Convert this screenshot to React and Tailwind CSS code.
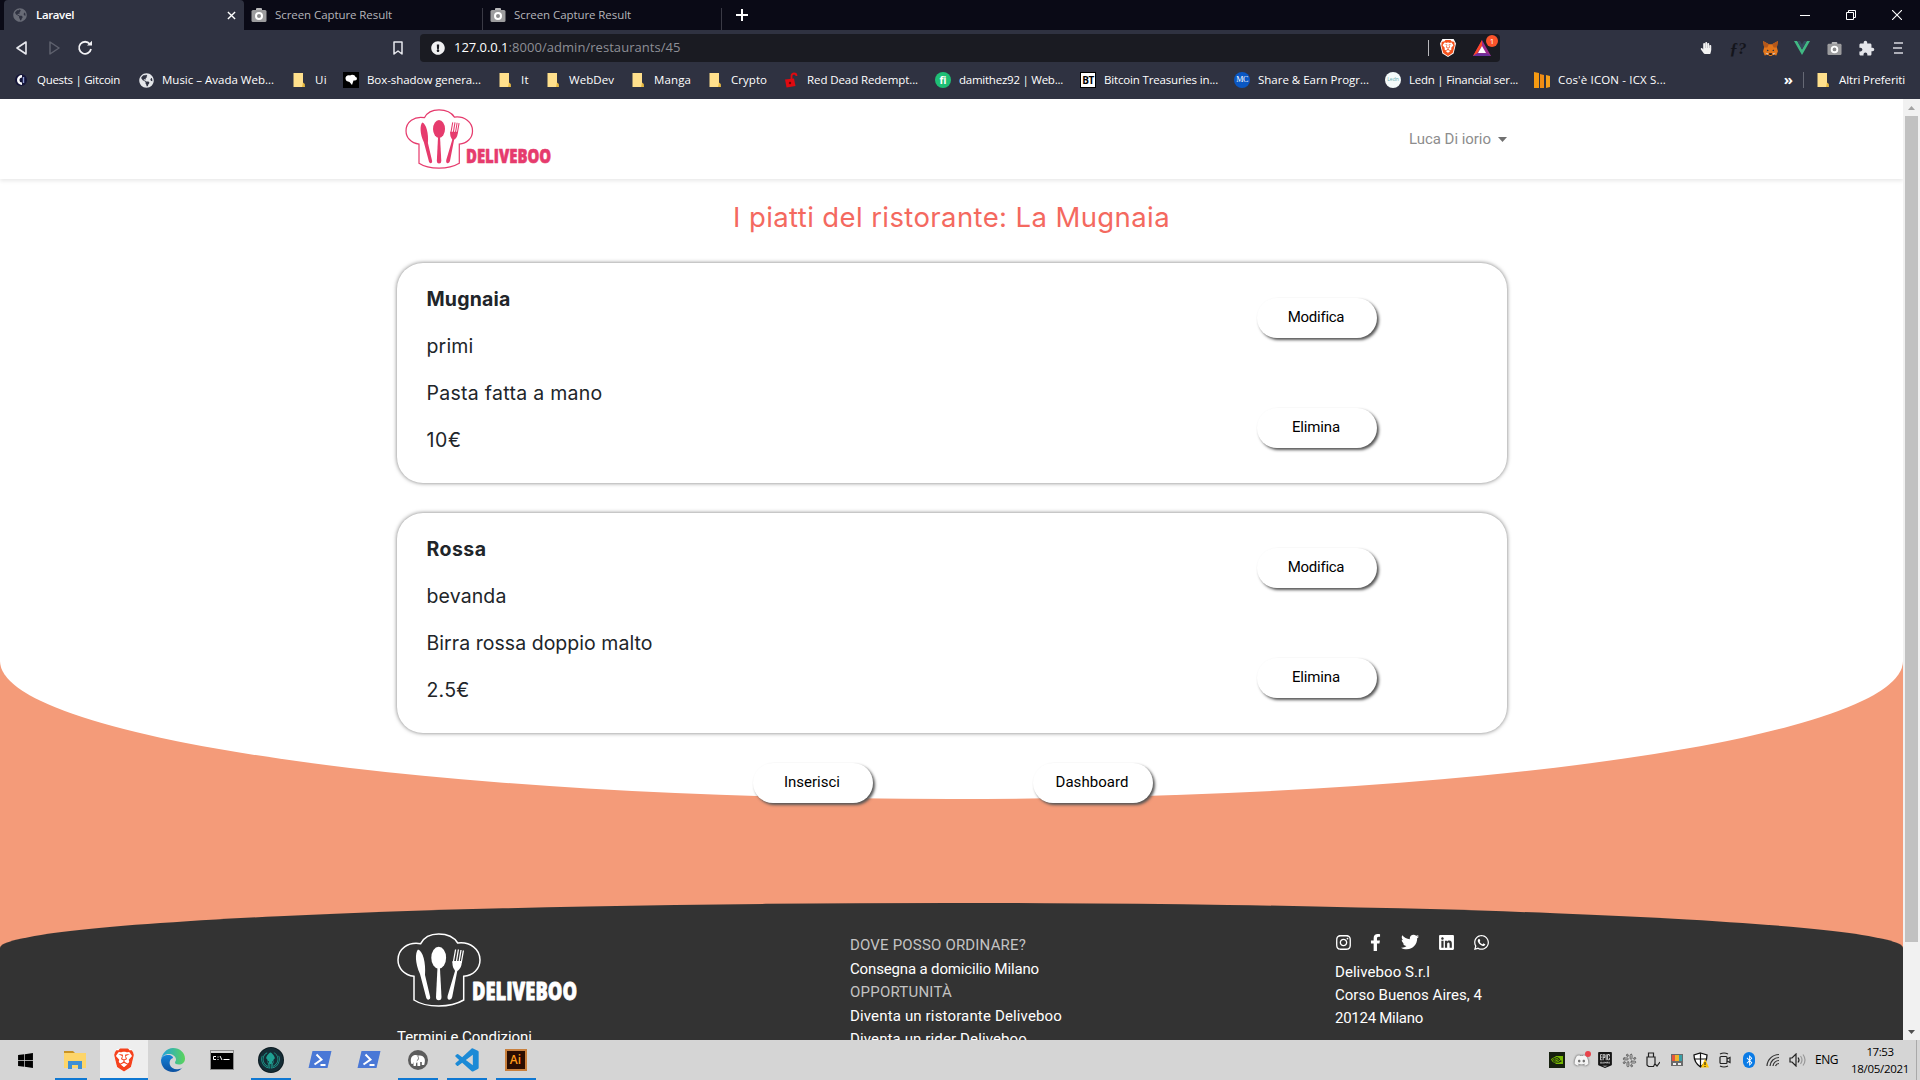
import { useLayoutEffect, useRef, useState } from "react";
import {
  FaInstagram, FaFacebookF, FaTwitter, FaLinkedin, FaWhatsapp, FaWindows, FaBluetoothB,
  FaDiscord, FaGitkraken, FaGlobeAmericas, FaHandPaper, FaExclamationCircle,
} from "react-icons/fa";
import { SiBrave, SiNvidia, SiEpicgames } from "react-icons/si";
import { BiLogoVisualStudio } from "react-icons/bi";
import { MdExtension } from "react-icons/md";
import { Slack } from "lucide-react";

/* A single line of text whose tracking is adjusted to fill the given width. */
function Label({ width, className = "", children }) {
  const ref = useRef(null);
  const [spacing, setSpacing] = useState(0);
  useLayoutEffect(() => {
    const el = ref.current;
    const natural = el.getBoundingClientRect().width - spacing * children.length;
    setSpacing((width - natural) / children.length);
  }, [width, children]);
  return (
    <span ref={ref} className={`inline-block shrink-0 whitespace-pre ${className}`} style={{ letterSpacing: `${spacing}px` }}>
      {children}
    </span>
  );
}

function Logo({ className }) {
  return (
    <svg viewBox="0 0 182 74" className={`overflow-visible ${className}`} fill="currentColor">
      <path
        d="M23.7 10.7C27 4 34 1 41.7 1S57 4 60.7 10C73 8.5 83 16 83 27C83 36 76 42.5 66.7 43.3V67C60 71 50 73 41.7 73S23 71 17 67V43.3C7 42 1 35 1 27C1 16 11 8.5 23.7 10.7Z"
        fill="none" stroke="currentColor" strokeWidth="1.5"
      />
      <path d="M21 16.5C18 20 18 30 23 41L29.3 65Q30 67 31.5 66.8Q33.7 66 33.2 64L28 42C29 30 26 18 21 16.5Z" />
      <ellipse cx="41.7" cy="24.7" rx="7.4" ry="11" />
      <path d="M40.5 34L39 64Q39 67.2 41.7 67.2Q44.5 67.2 44.5 64L42.9 34Z" />
      <path d="M58.6 16.5L56.2 30M61.4 16.5L59 31M64 17L61.7 31M66.4 17.5L64.2 30" stroke="currentColor" strokeWidth="1.3" />
      <path d="M55.5 28C55 35 57.6 36 58 38L50.6 63Q50 67 52.5 66.8Q54.7 66.4 55.2 64L60.3 38C62.5 36.5 64.8 34 64.9 28Z" />
      <text
        x="75" y="67" fontFamily="'Open Sans', sans-serif" fontWeight="800" fontSize="24.5" textLength="105" lengthAdjust="spacingAndGlyphs"
        stroke="currentColor" strokeWidth="0.8" strokeLinejoin="round"
      >
        DELIVEBOO
      </text>
    </svg>
  );
}

function CameraIcon({ className }) {
  return (
    <svg viewBox="0 0 16 16" className={className}>
      <rect x="5" y="1" width="6" height="4" rx="1" fill="#b9b9bb" />
      <rect x="0.5" y="3" width="15" height="12" rx="1.5" fill="#9c9c9e" />
      <circle cx="8" cy="9" r="3" fill="#8a8a8c" stroke="#fff" strokeWidth="2" />
    </svg>
  );
}

function Folder() {
  return (
    <svg viewBox="0 0 16 16" className="size-4">
      <path d="M2.5 1h9.5v12.5h1.5V15h-11z" fill="#ffe08c" />
      <path d="M12 10.5l1.8 1.5v3H11z" fill="#e8b93f" />
    </svg>
  );
}

function Gitcoin() {
  return (
    <svg viewBox="0 0 16 16" className="size-4">
      <circle cx="8" cy="8" r="6" fill="#15163a" />
      <path d="M9 3a5 5 0 1 0 0 10v-2.5a2.5 2.5 0 0 1 0-5z" fill="#fff" />
      <path d="M10.5 5v6" stroke="#8d9ad0" strokeWidth="1.4" />
    </svg>
  );
}

function MetaMask() {
  return (
    <svg viewBox="0 0 16 16" className="size-[17px]">
      <path d="M1 1l5.5 3h3L15 1l-1 6 1 3.5-1.5 4-3-.8L9 15H7l-1.5-1.3-3 .8L1 10.5 2 7z" fill="#e2761b" />
      <path d="M1 1l5.500 3L5 7 2 7zM15 1L9.500 4 11 7l3 0z" fill="#b4571a" />
      <path d="M5 9l1.500 1-2 .5zM11 9l-1.500 1 2 .5z" fill="#233447" />
      <path d="M6.500 12.500h3L9 14H7z" fill="#161616" />
      <path d="M3 12l3 .5-.5 1.500zM13 12l-3 .5.5 1.500z" fill="#d7c1b3" />
    </svg>
  );
}

const bookmarks = [
  { w: 125, tw: 83, label: "Quests | Gitcoin", icon: <Gitcoin /> },
  { w: 153, tw: 112, label: "Music – Avada Web...", icon: <FaGlobeAmericas className="size-[15px] text-[#e4e6ea]" /> },
  { w: 52, tw: 12, label: "Ui", icon: <Folder /> },
  {
    w: 154, tw: 114, label: "Box-shadow genera...",
    icon: (
      <svg viewBox="0 0 16 16" className="size-4">
        <path d="M0 0h16v16H0z" fill="#000" />
        <path d="M2.500 7C2 4 5 2.500 7 3.500 9 2 12 3 12.500 5c2 0 2 3.500-.5 3.500h-1.500L9 13 6.500 10 3.500 9z" fill="#fff" />
      </svg>
    ),
  },
  { w: 48, tw: 8, label: "It", icon: <Folder /> },
  { w: 85, tw: 45, label: "WebDev", icon: <Folder /> },
  { w: 77, tw: 37, label: "Manga", icon: <Folder /> },
  { w: 76, tw: 36, label: "Crypto", icon: <Folder /> },
  {
    w: 152, tw: 111, label: "Red Dead Redempt...",
    icon: (
      <svg viewBox="0 0 16 16" className="size-4">
        <path d="M2 7.500l9-1 1.500 7.500-9 1.500z" fill="#e00a10" />
        <path d="M8.500 7V4a2.500 2.500 0 0 1 5 0" fill="none" stroke="#e00a10" strokeWidth="1.800" />
        <circle cx="7" cy="11" r="1.200" fill="#6e0508" />
      </svg>
    ),
  },
  { w: 145, tw: 104, label: "damithez92 | Web...", icon: <span className="flex size-4 items-center justify-center rounded-full bg-[#1fbf75] font-['Open_Sans',sans-serif] text-[10px] font-bold">fi</span> },
  { w: 154, tw: 114, label: "Bitcoin Treasuries in...", icon: <span className="flex size-4 items-center justify-center border border-black bg-white font-['Open_Sans',sans-serif] text-[10px] font-bold tracking-tighter text-black">BT</span> },
  { w: 151, tw: 111, label: "Share & Earn Progr...", icon: <span className="flex size-4 items-center justify-center rounded-full bg-[#0a57c2] font-['Liberation_Serif',serif] text-[8px] tracking-tighter">MC</span> },
  { w: 149, tw: 109, label: "Ledn | Financial ser...", icon: <span className="flex size-4 items-center justify-center rounded-full bg-[#f4fafa] text-[5px] text-[#5fa9ad]">Ledn</span> },
  {
    w: 160, tw: 108, label: "Cos'è ICON - ICX S...",
    icon: (
      <svg viewBox="0 0 16 16" className="size-4">
        <path d="M0 0l5 1v15H0z" fill="#f59a12" /><path d="M6 2l4 1v13H6z" fill="#f08c14" /><path d="M12 3l4 1v11l-4 1z" fill="#f5a01c" />
      </svg>
    ),
  },
];

function Tab({ children, className }) {
  return <div className={`flex h-[30px] items-center ${className}`}>{children}</div>;
}

function TabStrip() {
  return (
    <div className="flex h-[30px] items-center bg-[#0a0a16] pl-1">
      <Tab className="w-[240px] rounded-t bg-[#2f3241] pl-[9px]">
        <FaGlobeAmericas className="size-[14px] text-[#686b76]" />
        <Label width={38} className="ml-[9px] text-[11.5px] font-semibold text-white">Laravel</Label>
        <svg viewBox="0 0 10 10" className="ml-auto mr-[8px] size-[9px]"><path d="M1 1l8 8M9 1l-8 8" stroke="#fff" strokeWidth="1.5" /></svg>
      </Tab>
      <Tab className="w-[239px] pl-[7px]">
        <CameraIcon className="size-4" />
        <Label width={117} className="ml-2 text-[11.5px] text-[#b5b5ba]">Screen Capture Result</Label>
        <span className="ml-auto mt-2 h-[22px] w-px bg-[#3a3a45]" />
      </Tab>
      <Tab className="w-[239px] pl-[7px]">
        <CameraIcon className="size-4" />
        <Label width={117} className="ml-2 text-[11.5px] text-[#b5b5ba]">Screen Capture Result</Label>
        <span className="ml-auto mt-2 h-[22px] w-px bg-[#3a3a45]" />
      </Tab>
      <svg viewBox="0 0 12 12" className="ml-[14px] size-3"><path d="M6 0v12M0 6h12" stroke="#fff" strokeWidth="2" /></svg>
      <div className="ml-auto mr-[18px] flex items-center gap-9 text-white">
        <svg viewBox="0 0 10 10" className="size-[10px]"><path d="M0 5.500h10" stroke="currentColor" /></svg>
        <svg viewBox="0 0 10 10" className="size-[10px]" fill="none" stroke="currentColor"><path d="M.5 2.500h7v7h-7zM2.500 2.500v-2h7v7h-2" /></svg>
        <svg viewBox="0 0 10 10" className="size-[10px]"><path d="M0 0l10 10M10 0L0 10" stroke="currentColor" strokeWidth="1.100" /></svg>
      </div>
    </div>
  );
}

function Toolbar() {
  return (
    <div className="flex h-[35px] items-center pt-px">
      <svg viewBox="0 0 14 14" className="ml-[15px] size-[14px]" fill="none"><path d="M11 1v12L2 7z" stroke="#e8e9ee" strokeWidth="1.600" strokeLinejoin="round" /></svg>
      <svg viewBox="0 0 14 14" className="ml-[18px] size-[14px]" fill="none"><path d="M3 1v12l9-6z" stroke="#5f626e" strokeWidth="1.500" strokeLinejoin="round" /></svg>
      <svg viewBox="0 0 16 16" className="ml-4 size-4" fill="none"><path d="M12.800 4A6 6 0 1 0 14 9" stroke="#f2f2f5" strokeWidth="1.800" /><path d="M10 5.500h5V.8z" fill="#f2f2f5" /></svg>
      <svg viewBox="0 0 12 14" className="ml-[299px] h-[14px] w-3" fill="none"><path d="M2 1h8v12L6 10l-4 3z" stroke="#e8e9ee" strokeWidth="1.500" strokeLinejoin="round" /></svg>
      <div className="ml-[16px] flex h-7 w-[1080px] items-center rounded bg-[#1a1b22] pl-[11px]">
        <FaExclamationCircle className="size-[14px] text-[#f0f0f2]" />
        <Label width={54.5} className="ml-[9px] text-[13px] text-white">127.0.0.1</Label>
        <Label width={172} className="text-[13px] text-[#8e8f96]">:8000/admin/restaurants/45</Label>
        <span className="ml-auto h-4 w-px bg-[#b8b8bc]" />
        <span className="ml-[11px] flex h-[18px] w-4 items-center justify-center bg-white [clip-path:polygon(15%_0,85%_0,100%_25%,85%_80%,50%_100%,15%_80%,0_25%)]">
          <SiBrave className="size-[18px] text-[#f5521d]" />
        </span>
        <div className="relative ml-[17px] mr-[9px] size-[18px]">
          <svg viewBox="0 0 18 18" className="size-[18px]">
            <path d="M9 1L0 17h18z" fill="#9b2a8c" /><path d="M9 1L0 17l4-2.500 5-8z" fill="#ff4724" /><path d="M0 17h18l-4-2.500H4z" fill="#6a2f9c" /><path d="M9 7l-4 7h8z" fill="#fff" />
          </svg>
          <span className="absolute -right-[7px] -top-[4px] flex size-3 items-center justify-center rounded-full bg-[#fb542b] text-[8px] text-white">1</span>
        </div>
      </div>
      <div className="ml-auto mr-[13px] flex items-center">
        <div className="flex w-8 justify-center"><FaHandPaper className="h-3 w-[14px] text-[#f2f2f2]" /></div>
        <div className="flex w-8 justify-center font-['Liberation_Serif',serif] text-[17px] font-bold italic leading-none text-[#14151c]">ƒ?</div>
        <div className="flex w-8 justify-center"><MetaMask /></div>
        <div className="flex w-8 justify-center">
          <svg viewBox="0 0 16 14" className="h-[14px] w-4"><path d="M0 0h3.200L8 8.500 12.800 0H16L8 14z" fill="#41b883" /><path d="M3.200 0H6l2 3.500L10 0h2.800L8 8.500z" fill="#35495e" /></svg>
        </div>
        <div className="flex w-8 justify-center"><CameraIcon className="size-[15px]" /></div>
        <div className="flex w-8 justify-center"><MdExtension className="size-[17px] text-[#e4e5ea]" /></div>
        <svg viewBox="0 0 10 12" className="ml-[11px] mr-[4px] h-3 w-[10px]"><path d="M1 1h9M0 6h9M1 11h9" stroke="#d7d8de" strokeWidth="1.700" /></svg>
      </div>
    </div>
  );
}

function BookmarksBar() {
  return (
    <div className="flex h-[34px] items-center pb-[4px] pl-[13px] text-[11.5px] text-white">
      {bookmarks.map((b) => (
        <div key={b.label} className="flex shrink-0 items-center" style={{ width: b.w }}>
          <span className="flex size-4 items-center justify-center">{b.icon}</span>
          <Label width={b.tw} className="ml-2">{b.label}</Label>
        </div>
      ))}
      <span className="ml-auto pb-0.5 text-[15px] font-bold leading-none">»</span>
      <span className="ml-[10px] mr-[11px] h-4 w-px bg-[#666975]" />
      <Folder />
      <Label width={66} className="ml-2 mr-[15px]">Altri Preferiti</Label>
    </div>
  );
}

function PillButton({ children, width }) {
  return (
    <button className="flex h-10 w-[120px] items-center justify-center rounded-[20px] bg-white pb-px pr-px text-[15px] text-black shadow-[2px_2px_3px_#555]">
      <Label width={width}>{children}</Label>
    </button>
  );
}

function DishCard({ lines }) {
  return (
    <article className="flex h-[220px] rounded-[26px] bg-white pl-[30px] pr-[130px] pt-[21px] shadow-[0_0_4px_#777]">
      <div className="flex flex-col gap-[17px] font-[Inter,sans-serif] text-[19.5px] leading-[30px] text-[#212529]">
        {lines.map(([text, width], i) => (
          <Label key={text} width={width} className={i === 0 ? "self-start font-bold" : "self-start"}>{text}</Label>
        ))}
      </div>
      <div className="ml-auto flex flex-col gap-[70px] pt-[14px]">
        <PillButton width={56}>Modifica</PillButton>
        <PillButton width={48}>Elimina</PillButton>
      </div>
    </article>
  );
}

const dishes = [
  [["Mugnaia", 84], ["primi", 47], ["Pasta fatta a mano", 176], ["10€", 35]],
  [["Rossa", 60], ["bevanda", 80], ["Birra rossa doppio malto", 226], ["2.5€", 43]],
];

function Scrollbar() {
  return (
    <div className="flex w-[17px] shrink-0 flex-col items-center bg-[#f1f1f1]">
      <svg viewBox="0 0 17 17" className="size-[17px]"><path d="M5 11l3.500-4L12 11z" fill="#a3a3a3" /></svg>
      <div className="h-[826px] w-[13px] bg-[#c1c1c1]" />
      <svg viewBox="0 0 17 17" className="mt-auto size-[17px]"><path d="M5 7l3.500 4L12 7z" fill="#505050" /></svg>
    </div>
  );
}

function Footer() {
  return (
    <footer className="mt-[104px] flex h-[200px] rounded-t-[50%_45px] bg-[#333] pl-[397px] text-[15px] leading-[23.5px] text-white">
      <div className="w-[453px] pt-[30px]">
        <Logo className="h-[74px] w-[182px]" />
        <Label width={135} className="mt-[19px]">Termini e Condizioni</Label>
      </div>
      <div className="flex w-[485px] flex-col items-start pt-[31px]">
        <Label width={176} className="text-[#c3c3c3]">DOVE POSSO ORDINARE?</Label>
        <Label width={189}>Consegna a domicilio Milano</Label>
        <Label width={102} className="text-[#c3c3c3]">OPPORTUNITÀ</Label>
        <Label width={212}>Diventa un ristorante Deliveboo</Label>
        <Label width={177}>Diventa un rider Deliveboo</Label>
      </div>
      <div className="flex flex-col items-start pt-7 leading-[23px]">
        <div className="mb-2 flex h-[22px] items-center">
          <FaInstagram className="size-[17px]" />
          <FaFacebookF className="ml-[15px] size-[17px]" />
          <FaTwitter className="ml-[17px] size-[18px]" />
          <FaLinkedin className="ml-[19px] size-[17px]" />
          <FaWhatsapp className="ml-[18px] size-[17px]" />
        </div>
        <Label width={95}>Deliveboo S.r.l</Label>
        <Label width={147}>Corso Buenos Aires, 4</Label>
        <Label width={88}>20124 Milano</Label>
      </div>
    </footer>
  );
}

function Page() {
  return (
    <div className="flex h-[941px] overflow-hidden bg-[#f49b79]">
      <div className="min-w-0 flex-1 font-[Roboto,sans-serif]">
        <div className="h-[700px] rounded-b-[50%_138px] bg-white">
          <nav className="flex h-[80px] items-center bg-white pl-[405px] pr-[396px] shadow-[0_2px_4px_rgba(0,0,0,0.09)]">
            <Logo className="h-[60px] w-[148px] text-[#e63b6d]" />
            <Label width={82} className="ml-auto text-[15px] text-[#8d8d8d]">Luca Di iorio</Label>
            <svg viewBox="0 0 9 5" className="ml-[7px] h-[5px] w-[9px]"><path d="M0 0h9L4.500 5z" fill="#707070" /></svg>
          </nav>
          <main className="mx-auto w-[1110px] pt-[21px]">
            <h1 className="flex justify-center font-[Inter,sans-serif] text-[27.5px] leading-[34px] text-[#f4695f]">
              <Label width={437}>I piatti del ristorante: La Mugnaia</Label>
            </h1>
            <div className="mt-[29px] flex flex-col gap-[30px]">
              {dishes.map((lines) => <DishCard key={lines[0][0]} lines={lines} />)}
            </div>
            <div className="mt-[30px] flex gap-[160px] pl-[356px]">
              <PillButton width={56}>Inserisci</PillButton>
              <PillButton width={73}>Dashboard</PillButton>
            </div>
          </main>
        </div>
        <Footer />
      </div>
      <Scrollbar />
    </div>
  );
}

function PowerShell() {
  return (
    <svg viewBox="0 0 24 20" className="h-5 w-6">
      <path d="M4.500 1H23.500L19.500 18H.5z" fill="#4a78d6" />
      <path d="M8.500 4.500l5 5-7 5M12.500 15h5" stroke="#fff" strokeWidth="2" fill="none" />
    </svg>
  );
}

const apps = [
  { w: 50, icon: <FaWindows className="size-[17px] text-black" /> },
  {
    w: 50, line: "w-8 mr-2",
    icon: (
      <svg viewBox="0 0 24 20" className="h-5 w-6">
        <path d="M1 1h9l2 2H1z" fill="#c99324" /><path d="M1 3h22v15H1z" fill="#fdd56a" /><path d="M5 19v-8h14v8h-4v-4H9v4z" fill="#3e8fd6" />
      </svg>
    ),
  },
  {
    w: 48, line: "w-12", active: true,
    icon: (
      <span className="flex h-[23px] w-5 items-center justify-center bg-white [clip-path:polygon(15%_0,85%_0,100%_25%,85%_80%,50%_100%,15%_80%,0_25%)]">
        <SiBrave className="size-[24px] shrink-0 text-[#f5421d]" />
      </span>
    ),
  },
  {
    w: 50,
    icon: (
      <svg viewBox="0 0 24 24" className="size-6">
        <defs>
          <linearGradient id="edgeTop" x1="0" x2="1"><stop offset="0" stopColor="#1fa0e0" /><stop offset="1" stopColor="#5bd45a" /></linearGradient>
          <linearGradient id="edgeLow" x1="0" y1="0" x2="0" y2="1"><stop offset="0" stopColor="#1583d8" /><stop offset="1" stopColor="#0c50a0" /></linearGradient>
        </defs>
        <path d="M0 12C1 5 6 0 12 0c7 0 12 5 12 10.500 0 4-3 6-6 6-3 0-4-1-4-2s1-1.500 1-3C15 8 11 6 8 6 4 6 1 8 0 12z" fill="url(#edgeTop)" />
        <path d="M0 12c1-4 4-5 7-5 4 0 5 2 5 3-3 1-4 4-3 7 1 3 5 5 9 4 2 0 3-1 4-2-2 3-6 5-10 5C5 24 0 19 0 12z" fill="url(#edgeLow)" />
      </svg>
    ),
  },
  {
    w: 48,
    icon: (
      <svg viewBox="0 0 24 20" className="h-5 w-6">
        <rect x=".5" y=".5" width="23" height="19" fill="#000" stroke="#8b8b8b" /><path d="M1 2h22" stroke="#d5d5d5" strokeWidth="2" />
        <path d="M6 6.500H3.500v3H6M8 6.500v1M8 9v1M10 6l2 4M13.500 9.500h6" stroke="#fff" fill="none" />
      </svg>
    ),
  },
  { w: 49, line: "w-10", icon: <span className="flex size-6 items-center justify-center rounded-full bg-[#142c35] ring-1 ring-[#0b1a20]"><FaGitkraken className="size-[19px] text-[#1fa193]" /></span> },
  { w: 49, icon: <PowerShell /> },
  { w: 49, icon: <PowerShell /> },
  {
    w: 49, line: "w-10",
    icon: (
      <svg viewBox="0 0 20 20" className="size-5">
        <circle cx="10" cy="10" r="10" fill="#5c5c5c" />
        <path d="M3.500 14C2 10 3 6 6 5.200c1.500-.5 3-.4 4 .6 2.500-1 5.500 0 6.500 2.700.8 2 .3 4-.3 6.500h-2.400v-3h-1.600v4H9.400v-3.500l-1.200.3-.4 3.200H5.600l-.3-4-.6 2z" fill="#fff" />
        <path d="M9.800 6c1.200 2 .8 4-1 4.800" stroke="#5c5c5c" strokeWidth=".8" fill="none" />
      </svg>
    ),
  },
  { w: 49, line: "w-10", icon: <BiLogoVisualStudio className="size-7 text-[#1c8ad6]" /> },
  { w: 49, line: "w-10", icon: <span className="flex h-[22px] w-[22px] items-center justify-center border-2 border-[#c9803d] bg-[#2a0d02] text-[12px] font-semibold text-[#ff9a1a]">Ai</span> },
];

const tray = [
  { id: "nvidia", icon: <span className="flex size-4 items-center justify-center bg-[#16200f]"><SiNvidia className="size-3 text-[#76b900]" /></span> },
  { id: "discord", icon: <span className="relative"><FaDiscord className="size-[15px] text-[#f5f5f5] drop-shadow-[0_0_1px_#333]" /><span className="absolute -right-0.5 -top-0.5 size-[6px] rounded-full bg-[#e8434b]" /></span> },
  { id: "epic", icon: <SiEpicgames className="size-4 text-[#161616]" /> },
  { id: "slack", icon: <Slack className="size-[15px] text-[#606060]" strokeWidth={1.6} /> },
  { id: "usb", icon: <svg viewBox="0 0 14 16" className="h-4 w-[14px]" fill="none" stroke="#222"><path d="M2.500 1h5v4h-5zM1 5h8v6.500L7.500 14.500h-5L1 13zM9 12l2 2 3-4" strokeWidth="1.200" /></svg> },
  { id: "tiles", icon: <svg viewBox="0 0 12 12" className="size-3"><path d="M0 0h12v12H0z" fill="#6b6b6b" /><path d="M1 1h3v6H1z" fill="#e5553c" /><path d="M4 1h4v6H4z" fill="#efb32c" /><path d="M8 1h3v6H8z" fill="#39a0a8" /><path d="M2 9h3v2H2zM7 9h3v2H7z" fill="#eee" /></svg> },
  { id: "shield", icon: <svg viewBox="0 0 16 16" className="size-4"><path d="M7.500 1L14 3c0 6-2 9-6.500 12C3 12 1 9 1 3z" fill="#fff" stroke="#111" strokeWidth="1.300" /><path d="M7.500 1v14M1 7h13" stroke="#111" strokeWidth="1.200" /><path d="M12 7l4 8.500H8z" fill="#ffc60a" /><path d="M12 10v3M12 14v1" stroke="#111" /></svg> },
  { id: "cam", icon: <svg viewBox="0 0 14 16" className="h-4 w-[14px]" fill="none" stroke="#222" strokeWidth="1.200"><rect x="2" y="4.500" width="7" height="7" rx="1" /><path d="M9 7l3-1.500v5L9 9M2 2q4-2 8 0M2 14q4 2 8 0" /></svg> },
  { id: "bt", icon: <span className="flex h-4 w-3 items-center justify-center rounded-full bg-[#0a7be6]"><FaBluetoothB className="size-[11px] text-white" /></span> },
  { id: "wifi", icon: <svg viewBox="0 0 14 14" className="size-[14px]" fill="none" stroke="#333" strokeWidth="1.200"><path d="M1 13A12 12 0 0 1 13 1.500M4 13A9 9 0 0 1 13 4.500M7 13a6 6 0 0 1 6-5.500M9.500 13A4 4 0 0 1 13 10.500" /></svg> },
  { id: "vol", icon: <svg viewBox="0 0 17 14" className="h-[14px] w-[17px]" fill="none" stroke="#222" strokeWidth="1.200"><path d="M1 5h2l4-4v12L3 9H1z" /><path d="M9 4.500q2 2.500 0 5" /><path d="M11.500 3q3 4 0 8M14 1.500q4 5.500 0 11" stroke="#999" /></svg> },
];

function Taskbar() {
  return (
    <div className="flex h-10 bg-[#d5d5d5] text-black">
      {apps.map((app, i) => (
        <div key={i} className={`flex shrink-0 flex-col items-center ${app.active ? "bg-[#eeeeee]" : ""}`} style={{ width: app.w }}>
          <div className="flex h-[38px] items-center pt-0.5">{app.icon}</div>
          <span className={`h-[2px] bg-[#0f78d2] ${app.line ?? "w-0"}`} />
        </div>
      ))}
      <div className="ml-auto flex items-center">
        {tray.map((t) => <div key={t.id} className="flex w-6 items-center justify-center">{t.icon}</div>)}
        <Label width={23} className="ml-[6px] text-[12px]">ENG</Label>
        <div className="ml-[13px] flex w-[58px] flex-col items-center text-[11.5px] leading-[17px]">
          <Label width={27}>17:53</Label>
          <Label width={58}>18/05/2021</Label>
        </div>
        <span className="ml-[7px] mr-[3px] h-10 w-px bg-[#a9a9a9]" />
      </div>
    </div>
  );
}

export default function App() {
  return (
    <div className="h-[1080px] w-[1920px] overflow-hidden font-['Open_Sans','Noto_Sans',sans-serif]">
      <header className="bg-[#2f3241]">
        <TabStrip />
        <Toolbar />
        <BookmarksBar />
      </header>
      <Page />
      <Taskbar />
    </div>
  );
}
